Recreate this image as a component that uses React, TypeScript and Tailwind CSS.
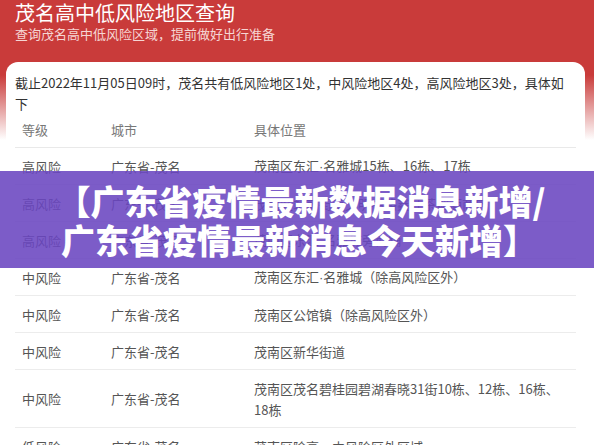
import React from "react";

const Dot = () => <span style={{ fontFamily: '"Liberation Sans", sans-serif' }}>·</span>;

const rows: { level: string; city: string; place: React.ReactNode; tall?: boolean }[] = [
  { level: "高风险", city: "广东省-茂名", place: <>茂南区东汇<Dot />名雅城15栋、16栋、17栋</> },
  { level: "高风险", city: "广东省-茂名", place: "茂南区站前街道文明中路鑫旺茶烟酒商店" },
  { level: "高风险", city: "广东省-茂名", place: <>茂南区东汇<Dot />名雅城旁商铺</> },
  { level: "中风险", city: "广东省-茂名", place: <>茂南区东汇<Dot />名雅城（除高风险区外）</> },
  { level: "中风险", city: "广东省-茂名", place: "茂南区公馆镇（除高风险区外）" },
  { level: "中风险", city: "广东省-茂名", place: "茂南区新华街道" },
  {
    level: "中风险",
    city: "广东省-茂名",
    place: (
      <>
        茂南区茂名碧桂园碧湖春晓31街10栋、12栋、16栋、
        <br />
        18栋
      </>
    ),
    tall: true,
  },
  { level: "低风险", city: "广东省-茂名", place: "茂南区除高、中风险区外区域" },
];

export default function App() {
  return (
    <div
      className="relative h-[445px] w-[594px] overflow-hidden bg-[linear-gradient(to_bottom,#c93b3a_0px,#c93b3a_75px,#ffffff_140px)]"
      style={{ fontFamily: '"Noto Sans CJK SC", "Noto Sans", sans-serif' }}
    >
      <div className="px-[15px] pt-[1px] h-[62px]">
        <div className="text-[20px] leading-6 text-white">茂名高中低风险地区查询</div>
        <div className="text-[13px] leading-[18px] text-[#f6d6d4]">查询茂名高中低风险区域，提前做好出行准备</div>
      </div>

      <div className="ml-[6px] w-[579px] rounded-t-[12px] bg-white px-[9px] pt-[10px]">
        <p className="text-[13px] leading-[21px] text-[#333]">
          截止2022年11月05日09时，茂名共有低风险地区1处，中风险地区4处，高风险地区3处，具体如
          <br />下
        </p>
        <div className="mt-[-2px] text-[13px] text-[#555]">
          <div className="flex h-[36px] items-center border-b border-[#e9e9e9] text-[#777]">
            <div className="w-[96px] pl-[7px]">等级</div>
            <div className="w-[143px]">城市</div>
            <div className="flex-1">具体位置</div>
          </div>
          {rows.map((r, i) => (
            <div
              key={i}
              className={`flex items-center border-b border-[#ececec] leading-[21px] ${r.tall ? "h-[58px]" : "h-[37px]"}`}
            >
              <div className="w-[96px] pl-[7px]">{r.level}</div>
              <div className="w-[143px]">{r.city}</div>
              <div className="flex-1">{r.place}</div>
            </div>
          ))}
        </div>
      </div>

      <div className="absolute left-0 top-[171px] flex h-[97px] w-[594px] flex-col items-center justify-center bg-[#6a45c0]/[0.88]">
        <div className="pl-[8px] text-[34px] font-black leading-[39px] text-white">【广东省疫情最新数据消息新增/</div>
        <div className="pl-[4px] text-[34px] font-black leading-[39px] text-white">广东省疫情最新消息今天新增】</div>
      </div>
    </div>
  );
}
